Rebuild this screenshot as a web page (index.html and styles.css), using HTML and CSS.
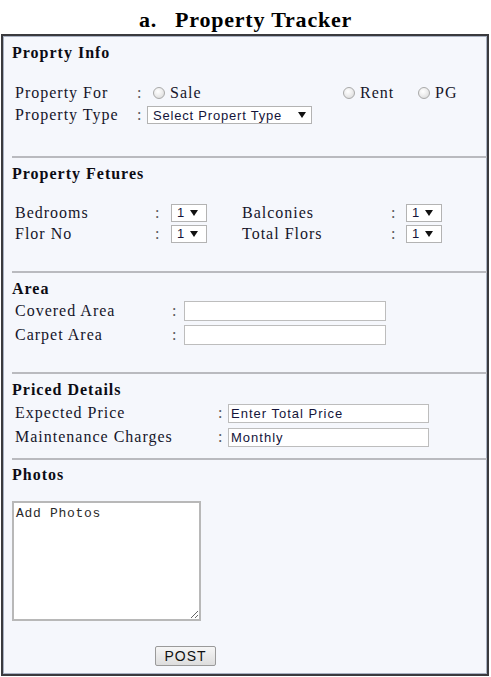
FILE: index.html
```html
<!DOCTYPE html>
<html lang="en">
<head>
  <meta charset="UTF-8">
  <meta name="viewport" content="width=device-width, initial-scale=1.0">
  <title>Property Tracker</title>
  <link rel="stylesheet" href="styles.css">
</head>
<body>
  <h1 class="title"><span class="title-num">a.</span>Property Tracker</h1>

  <form class="frame">
    <!-- basic info -->
    <section class="sect sect-info">
      <h2>Proprty Info</h2>
      <div class="row info-row">
        <span class="lbl">Property For</span>
        <span class="colon">:</span>
        <div class="radios">
          <label class="opt opt-sale"><input type="radio" name="for">Sale</label>
          <label class="opt opt-rent"><input type="radio" name="for">Rent</label>
          <label class="opt"><input type="radio" name="for">PG</label>
        </div>
      </div>
      <div class="row info-row">
        <span class="lbl">Property Type</span>
        <span class="colon">:</span>
        <span class="pick pick-wide">
          <select><option>Select Propert Type</option></select>
        </span>
      </div>
    </section>

    <!-- features -->
    <section class="sect sect-features">
      <h2>Property Fetures</h2>
      <div class="row feat-row">
        <span class="lbl">Bedrooms</span>
        <span class="colon">:</span>
        <span class="pick"><select><option>1</option></select></span>
        <span class="lbl">Balconies</span>
        <span class="colon">:</span>
        <span class="pick"><select><option>1</option></select></span>
      </div>
      <div class="row feat-row">
        <span class="lbl">Flor No</span>
        <span class="colon">:</span>
        <span class="pick"><select><option>1</option></select></span>
        <span class="lbl">Total Flors</span>
        <span class="colon">:</span>
        <span class="pick"><select><option>1</option></select></span>
      </div>
    </section>

    <!-- area -->
    <section class="sect sect-area">
      <h2>Area</h2>
      <div class="row area-row">
        <span class="lbl">Covered Area</span>
        <span class="colon">:</span>
        <input type="text" class="field field-area">
      </div>
      <div class="row area-row">
        <span class="lbl">Carpet Area</span>
        <span class="colon">:</span>
        <input type="text" class="field field-area">
      </div>
    </section>

    <!-- price -->
    <section class="sect sect-price">
      <h2>Priced Details</h2>
      <div class="rows">
        <div class="row price-row">
          <span class="lbl">Expected Price</span>
          <span class="colon">:</span>
          <input type="text" class="field field-price" value="Enter Total Price">
        </div>
        <div class="row price-row">
          <span class="lbl">Maintenance Charges</span>
          <span class="colon">:</span>
          <input type="text" class="field field-price" value="Monthly">
        </div>
      </div>
    </section>

    <!-- photos -->
    <section class="sect sect-photos">
      <h2>Photos</h2>
      <textarea class="photos">Add Photos</textarea>
      <button type="button" class="post">POST</button>
    </section>
  </form>
</body>
</html>
```

FILE: styles.css
```css
body {
  margin: 0;
  background-color: #fff;
  color: #15152a;
  font-family: "Liberation Serif", "Times New Roman", serif;
}

.title {
  margin: 0;
  padding-top: 5px;
  height: 29px;
  line-height: 29px;
  font-size: 22px;
  letter-spacing: 0.8px;
  text-align: center;
  color: #000;
}

.title-num {
  margin-right: 18px;
}

.frame {
  box-sizing: border-box;
  width: 488px;
  margin: 0 0 0 1px;
  border: 2px solid #3a3a3e;
  box-shadow: inset 0 0 0 1px #a9b1c2;
  background-color: #f5f7fc;
  letter-spacing: 1px;
}

.sect {
  margin-left: 9px;
  border-bottom: 2px solid #b9babf;
}

.sect h2 {
  margin: 0;
  font-size: 16px;
  line-height: 20px;
  color: #0c0c14;
}

.row {
  display: grid;
  align-items: center;
  padding-left: 3px;
  font-size: 16px;
}

.colon {
  color: #555;
}

/* Proprty Info */
.sect-info {
  padding: 7px 0 30px;
}

.sect-info h2 {
  margin-bottom: 19px;
}

.info-row {
  grid-template-columns: 122px 10px auto;
  height: 22px;
}

.radios {
  display: flex;
  align-items: center;
  padding-left: 6px;
}

.opt {
  display: flex;
  align-items: center;
  gap: 5px;
}

.opt-sale {
  width: 190px;
}

.opt-rent {
  width: 75px;
}

.opt input {
  appearance: none;
  margin: 0;
  width: 12px;
  height: 12px;
  border: 1px solid #a9a9a9;
  border-radius: 50%;
  background: radial-gradient(circle at 40% 35%, #fff 0, #f0f0f0 40%, #d4d4d4 100%);
}

/* select boxes with drawn arrow */
.pick {
  position: relative;
  display: inline-flex;
  justify-self: start;
}

.pick select {
  appearance: none;
  box-sizing: border-box;
  width: 36px;
  height: 18px;
  margin: 0;
  padding: 0 0 0 5px;
  border: 1px solid #b3b3b3;
  border-radius: 0;
  background-color: #fff;
  color: #14143a;
  font-family: "Liberation Sans", Arial, sans-serif;
  font-size: 13px;
  letter-spacing: 1px;
}

.pick::after {
  content: "";
  position: absolute;
  right: 9px;
  top: 6px;
  border-left: 4px solid transparent;
  border-right: 4px solid transparent;
  border-top: 6px solid #111;
  pointer-events: none;
}

.pick-wide select {
  width: 165px;
  letter-spacing: 0.8px;
}

.pick-wide::after {
  right: 6px;
}

/* Property Fetures */
.sect-features {
  padding: 6px 0 27px;
}

.sect-features h2 {
  margin-bottom: 18px;
}

.feat-row {
  grid-template-columns: 140px 16px 71px 149px 15px 37px;
  height: 21px;
}

/* text inputs */
.field {
  box-sizing: border-box;
  margin: 0;
  padding: 0 0 0 2px;
  border: 1px solid #bdbdbd;
  border-radius: 0;
  background-color: #fff;
  color: #14143a;
  font-family: "Liberation Sans", Arial, sans-serif;
  font-size: 13px;
  letter-spacing: 1px;
}

/* Area */
.sect-area {
  padding: 6px 0 25px;
}

.area-row {
  grid-template-columns: 157px 12px 202px;
  height: 24px;
}

.field-area {
  width: 202px;
  height: 20px;
}

/* Priced Details */
.sect-price {
  padding: 6px 0 9px;
}

.sect-price .rows {
  margin-top: 1px;
}

.price-row {
  grid-template-columns: 203px 10px 201px;
  height: 24px;
}

.field-price {
  width: 201px;
  height: 19px;
}

/* Photos */
.sect-photos {
  display: flex;
  flex-direction: column;
  align-items: flex-start;
  padding: 5px 0 8px;
  border-bottom: none;
}

.photos {
  box-sizing: border-box;
  width: 189px;
  height: 120px;
  margin: 16px 0 0;
  padding: 3px 2px;
  border: 2px solid #b8b8b8;
  background-color: #fff;
  color: #2a2a2a;
  font-family: "Liberation Mono", "Courier New", monospace;
  font-size: 13px;
  letter-spacing: 0.7px;
}

.post {
  box-sizing: border-box;
  width: 61px;
  height: 20px;
  margin: 25px 0 0 143px;
  padding: 0;
  border: 1px solid #9a9a9a;
  border-radius: 2px;
  background: linear-gradient(#f6f6f6, #dddddd);
  color: #111;
  font-family: "Liberation Sans", Arial, sans-serif;
  font-size: 14px;
  letter-spacing: 1px;
}
```
